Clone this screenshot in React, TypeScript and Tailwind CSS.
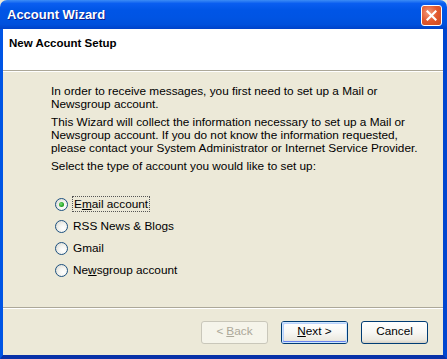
import React from "react";

const font = { fontFamily: '"Liberation Sans", Arial, sans-serif' };

function Radio({ checked, label }: { checked?: boolean; label: React.ReactNode }) {
  return (
    <div className="flex h-[22px] items-center">
      <div className="ml-[4px] flex h-[13px] w-[13px] items-center justify-center rounded-full border border-[#1C5180] bg-[radial-gradient(circle_at_65%_65%,#ffffff_0%,#f4f4f0_40%,#d6d5cc_100%)]">
        {checked && (
          <div className="h-[5px] w-[5px] rounded-full bg-[radial-gradient(circle_at_40%_40%,#7ae07a_0%,#21a121_60%,#118811_100%)]" />
        )}
      </div>
      <div className="ml-[5px]">{label}</div>
    </div>
  );
}

function Button({
  children,
  disabled,
  def,
}: {
  children: React.ReactNode;
  disabled?: boolean;
  def?: boolean;
}) {
  if (disabled) {
    return (
      <div className="flex h-[23px] w-[67px] items-center justify-center rounded-[3px] border border-[#C9C7BA] bg-[#F5F4EA] text-[#ACA899]">
        {children}
      </div>
    );
  }
  return (
    <div className="flex h-[23px] w-[67px] items-center justify-center rounded-[3px] border border-[#003C74] bg-[linear-gradient(to_bottom,#ffffff_0%,#f7f7f4_50%,#eceae1_85%,#d6d0c5_100%)] text-black">
      <div
        className={
          def
            ? "flex h-full w-full items-center justify-center rounded-[2px] shadow-[inset_0_0_0_1px_#CEE7FF,inset_0_-1px_0_1px_#6982EE,inset_1px_1px_0_1px_#B9D1FC]"
            : "flex h-full w-full items-center justify-center"
        }
      >
        {children}
      </div>
    </div>
  );
}

export default function App() {
  return (
    <div className="h-[359px] w-[447px] overflow-hidden bg-[#ECE9D8] text-[11.8px] text-black" style={font}>
      <div className="flex h-full w-full flex-col">
        {/* title bar */}
        <div className="relative flex h-[29px] shrink-0 items-center rounded-t-[7px] bg-[linear-gradient(to_bottom,#3c8cf5_0%,#0a5ef0_12%,#0055e6_35%,#0054e3_60%,#0050dc_85%,#0042c8_100%)] pl-[7px]">
          <span className="text-[13px] font-bold text-white [text-shadow:1px_1px_0_#0a1e8c]">Account Wizard</span>
          <div className="absolute right-[5px] top-[5px] flex h-[21px] w-[21px] items-center justify-center rounded-[3px] border border-white bg-[radial-gradient(circle_at_35%_35%,#f29a7c_0%,#e2582e_50%,#cc4a20_100%)]">
            <svg width="11" height="11" viewBox="0 0 11 11">
              <path d="M1.5 1.5 L9.5 9.5 M9.5 1.5 L1.5 9.5" stroke="white" strokeWidth="2.2" strokeLinecap="square" />
            </svg>
          </div>
        </div>
        {/* body with blue frame */}
        <div className="flex min-h-0 flex-1 flex-col border-b-[4px] border-l-[3px] border-r-[4px] border-b-[#0831a8] border-l-[#0055e5] border-r-[#0046d0]">
          {/* header */}
          <div className="h-[42px] shrink-0 border-b border-b-[#ACA899] bg-white pl-[6px] pt-[6px]">
            <span className="text-[11.5px] font-bold">New Account Setup</span>
          </div>
          <div className="h-px shrink-0 bg-white" />
          {/* content */}
          <div className="flex-1 pl-[48px] pt-[13px] leading-[13px]">
            <div className="whitespace-nowrap">
              In order to receive messages, you first need to set up a Mail or
              <br />
              Newsgroup account.
            </div>
            <div className="mt-[5px] whitespace-nowrap">
              This Wizard will collect the information necessary to set up a Mail or
              <br />
              Newsgroup account. If you do not know the information requested,
              <br />
              please contact your System Administrator or Internet Service Provider.
            </div>
            <div className="mt-[5px] whitespace-nowrap">Select the type of account you would like to set up:</div>
            <div className="mt-[20px] flex flex-col">
              <Radio
                checked
                label={
                  <span className="px-[1px] outline-1 outline-dotted outline-[#555]">
                    E<span className="underline">m</span>ail account
                  </span>
                }
              />
              <Radio label="RSS News & Blogs" />
              <Radio label="Gmail" />
              <Radio
                label={
                  <span>
                    Ne<span className="underline">w</span>sgroup account
                  </span>
                }
              />
            </div>
          </div>
          {/* bottom separator */}
          <div className="h-px shrink-0 bg-[#ACA899]" />
          <div className="h-px shrink-0 bg-white" />
          {/* buttons */}
          <div className="flex h-[46px] shrink-0 items-center justify-end gap-[13px] pr-[15px]">
            <Button disabled>
              &lt; <span className="ml-[3px] underline">B</span>ack
            </Button>
            <Button def>
              <span className="underline">N</span>ext &gt;
            </Button>
            <Button>Cancel</Button>
          </div>
        </div>
      </div>
    </div>
  );
}
